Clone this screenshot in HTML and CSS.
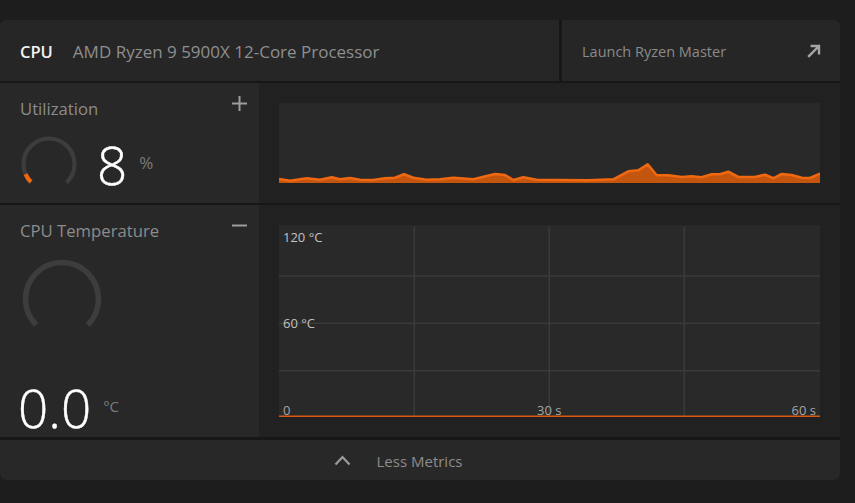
FILE: index.html
```html
<!DOCTYPE html>
<html lang="en">
<head>
<meta charset="utf-8">
<title>CPU Metrics</title>
<link rel="stylesheet" href="styles.css">
</head>
<body>
<div class="card">
  <header class="card-header">
    <div class="title-section">
      <span class="cpu-label">CPU</span>
      <span class="cpu-name">AMD Ryzen 9 5900X 12-Core Processor</span>
    </div>
    <a class="launch">
      <span>Launch Ryzen Master</span>
      <svg class="launch-icon" width="14" height="14" viewBox="0 0 14 14"><path d="M1.2 12.8 L12 2 M3.6 2 H12 V10.4" fill="none" stroke="#a6a6a6" stroke-width="2.4"/></svg>
    </a>
  </header>

  <section class="metric-row util-row">
    <div class="metric-panel">
      <div class="panel-head">
        <span class="panel-title">Utilization</span>
        <span class="toggle"><svg width="15" height="15" viewBox="0 0 15 15"><path d="M0 7.5 H15 M7.5 0 V15" stroke="#9c9c9c" stroke-width="2"/></svg></span>
      </div>
      <div class="util-body">
        <svg class="gauge-small" width="56" height="56" viewBox="0 0 56 56">
          <circle cx="28" cy="28" r="25.5" fill="none" stroke="#3d3d3d" stroke-width="4.2" stroke-dasharray="120.2 200" transform="rotate(135 28 28)"/>
          <circle cx="28" cy="28" r="25.5" fill="none" stroke="#ef6511" stroke-width="4.2" stroke-dasharray="9.6 200" transform="rotate(135 28 28)"/>
        </svg>
        <span class="big-value util-value">8</span>
        <span class="unit util-unit">%</span>
      </div>
    </div>
    <div class="chart-wrap">
      <div class="chart">
        <svg class="chart-svg" viewBox="279 103 541 80" preserveAspectRatio="none">
          <path d="M279 183 L279,179 290,180.7 306.7,178.3 320,179.7 331.7,177.3 340,179.3 350,178 360,179.7 373,180 385,178.3 395,177.7 404,174.3 413.3,177.7 426.7,179.7 440,179.3 453.3,177.7 460,178.3 473.3,179.3 486.7,176 495,174 505,175 513.3,180 523.3,177.3 536.7,179.7 560,180 588.3,180.3 613.3,179.3 628.3,171.3 638.3,170.3 647.7,164.3 656.7,175.3 668.3,175.3 681.7,177 691.7,176.3 701.7,177.3 711.7,174.3 720,174.3 728.3,171.7 738.3,177 755,177 765,174.7 773.3,178.3 781.7,174 791.7,175 801.7,177.7 810,178 820,173.7 L820 183 Z" fill="#c4550f"/>
          <polyline points="279,179 290,180.7 306.7,178.3 320,179.7 331.7,177.3 340,179.3 350,178 360,179.7 373,180 385,178.3 395,177.7 404,174.3 413.3,177.7 426.7,179.7 440,179.3 453.3,177.7 460,178.3 473.3,179.3 486.7,176 495,174 505,175 513.3,180 523.3,177.3 536.7,179.7 560,180 588.3,180.3 613.3,179.3 628.3,171.3 638.3,170.3 647.7,164.3 656.7,175.3 668.3,175.3 681.7,177 691.7,176.3 701.7,177.3 711.7,174.3 720,174.3 728.3,171.7 738.3,177 755,177 765,174.7 773.3,178.3 781.7,174 791.7,175 801.7,177.7 810,178 820,173.7" fill="none" stroke="#f0680f" stroke-width="2.6" stroke-linejoin="round"/>
        </svg>
      </div>
    </div>
  </section>

  <section class="metric-row temp-row">
    <div class="metric-panel temp-panel">
      <div class="panel-head">
        <span class="panel-title">CPU Temperature</span>
        <span class="toggle"><svg width="15" height="15" viewBox="0 0 15 15"><path d="M0 7.5 H15" stroke="#9c9c9c" stroke-width="2"/></svg></span>
      </div>
      <svg class="gauge-large" width="80" height="80" viewBox="0 0 80 80">
        <circle cx="40" cy="40" r="36.5" fill="none" stroke="#3d3d3d" stroke-width="5.6" stroke-dasharray="172 300" transform="rotate(135 40 40)"/>
      </svg>
      <div class="temp-value">
        <span class="big-value">0.0</span>
        <span class="unit temp-unit">°C</span>
      </div>
    </div>
    <div class="chart-wrap">
      <div class="chart temp-chart">
        <svg class="chart-svg" viewBox="279 225 541 192" preserveAspectRatio="none">
          <g stroke="#3a3a3a" stroke-width="1.6">
            <line x1="279" y1="276" x2="820" y2="276"/>
            <line x1="279" y1="323.3" x2="820" y2="323.3"/>
            <line x1="279" y1="370.7" x2="820" y2="370.7"/>
            <line x1="414.3" y1="226.7" x2="414.3" y2="417"/>
            <line x1="549.3" y1="226.7" x2="549.3" y2="417"/>
            <line x1="684.3" y1="226.7" x2="684.3" y2="417"/>
          </g>
          <line x1="279" y1="416.4" x2="820" y2="416.4" stroke="#d9580f" stroke-width="1.8"/>
        </svg>
        <span class="axis-label y-label y-top">120 °C</span>
        <span class="axis-label y-label y-mid">60 °C</span>
        <span class="axis-label x-label x-start">0</span>
        <span class="axis-label x-label x-mid">30 s</span>
        <span class="axis-label x-label x-end">60 s</span>
      </div>
    </div>
  </section>

  <footer class="less-bar">
    <svg width="17" height="11" viewBox="0 0 17 11"><polyline points="1.5,9.5 8.5,2 15.5,9.5" fill="none" stroke="#9c9c9c" stroke-width="2.2"/></svg>
    <span>Less Metrics</span>
  </footer>
</div>
</body>
</html>
```

FILE: styles.css
```css
* {
  box-sizing: border-box;
}

body {
  margin: 0;
  background: #1d1d1d;
  font-family: "Open Sans", "Noto Sans", sans-serif;
}

.card {
  width: 840px;
  margin-top: 20px;
  display: flex;
  flex-direction: column;
  background: #171717;
  border-radius: 6px;
  overflow: hidden;
}

.card-header {
  height: 61px;
  display: grid;
  grid-template-columns: 559px 1fr;
  column-gap: 3px;
  margin-bottom: 2px;
}

.title-section {
  background: #262626;
  display: flex;
  align-items: center;
  gap: 20px;
  padding-left: 20px;
  padding-top: 2px;
  font-size: 17px;
}

.cpu-label {
  color: #f2f2f2;
  font-weight: 600;
  font-size: 16.5px;
}

.cpu-name {
  color: #8e8e8e;
}

.launch {
  background: #262626;
  display: flex;
  align-items: center;
  justify-content: space-between;
  padding: 2px 19px 0 20px;
  color: #8a8a8a;
  font-size: 14.5px;
}

.launch-icon {
  margin-top: -1px;
}

.metric-row {
  display: grid;
  grid-template-columns: 259px 1fr;
  margin-bottom: 3px;
}

.util-row {
  height: 119px;
}

.temp-row {
  height: 232px;
}

.metric-panel {
  background: #282828;
  padding: 14px 12px 0 20px;
  display: flex;
  flex-direction: column;
}

.panel-head {
  display: flex;
  justify-content: space-between;
  align-items: flex-start;
}

.panel-title {
  color: #8c8c8c;
  font-size: 16.7px;
  line-height: 22px;
  margin-top: 1px;
}

.toggle {
  display: block;
  width: 15px;
  height: 15px;
  margin-top: -1px;
}

.toggle svg {
  display: block;
}

.util-body {
  margin-top: 16px;
  display: flex;
  align-items: flex-start;
  height: 56px;
}

.gauge-small {
  margin-left: 1px;
  flex: none;
}

.big-value {
  color: #ffffff;
  font-weight: 300;
  font-size: 53px;
  line-height: 53px;
  -webkit-text-stroke: 0.4px #ffffff;
}

.util-value {
  margin-left: 20px;
  margin-top: 2px;
}

.unit {
  color: #7c7c7c;
  font-size: 15px;
  line-height: 20px;
  margin-left: 12px;
}

.util-unit {
  font-size: 17px;
  margin-top: 17px;
}

.gauge-large {
  margin-top: 17px;
  margin-left: 2px;
  flex: none;
}

.temp-value {
  margin-top: auto;
  margin-left: -2px;
  padding-bottom: 3px;
  display: flex;
  align-items: flex-start;
}

.temp-unit {
  margin-top: 15px;
}

.chart-wrap {
  background: #212121;
  padding: 20px;
}

.chart {
  position: relative;
  height: 100%;
  background: #292929;
}

.chart-svg {
  display: block;
  width: 100%;
  height: 100%;
}

.axis-label {
  position: absolute;
  font-size: 13px;
  line-height: 16px;
  white-space: nowrap;
}

.y-label {
  color: #c2c2c2;
  left: 4px;
}

.y-top {
  top: 4px;
}

.y-mid {
  top: 90px;
}

.x-label {
  color: #a6a6a6;
  top: 177px;
}

.x-start {
  left: 4px;
}

.x-mid {
  left: 258px;
}

.x-end {
  right: 4px;
}

.less-bar {
  height: 40px;
  background: #282828;
  display: flex;
  align-items: center;
  justify-content: center;
  gap: 26px;
  padding-right: 44px;
  padding-top: 1px;
  color: #8c8c8c;
  font-size: 15px;
}

.less-bar svg {
  display: block;
}
```
